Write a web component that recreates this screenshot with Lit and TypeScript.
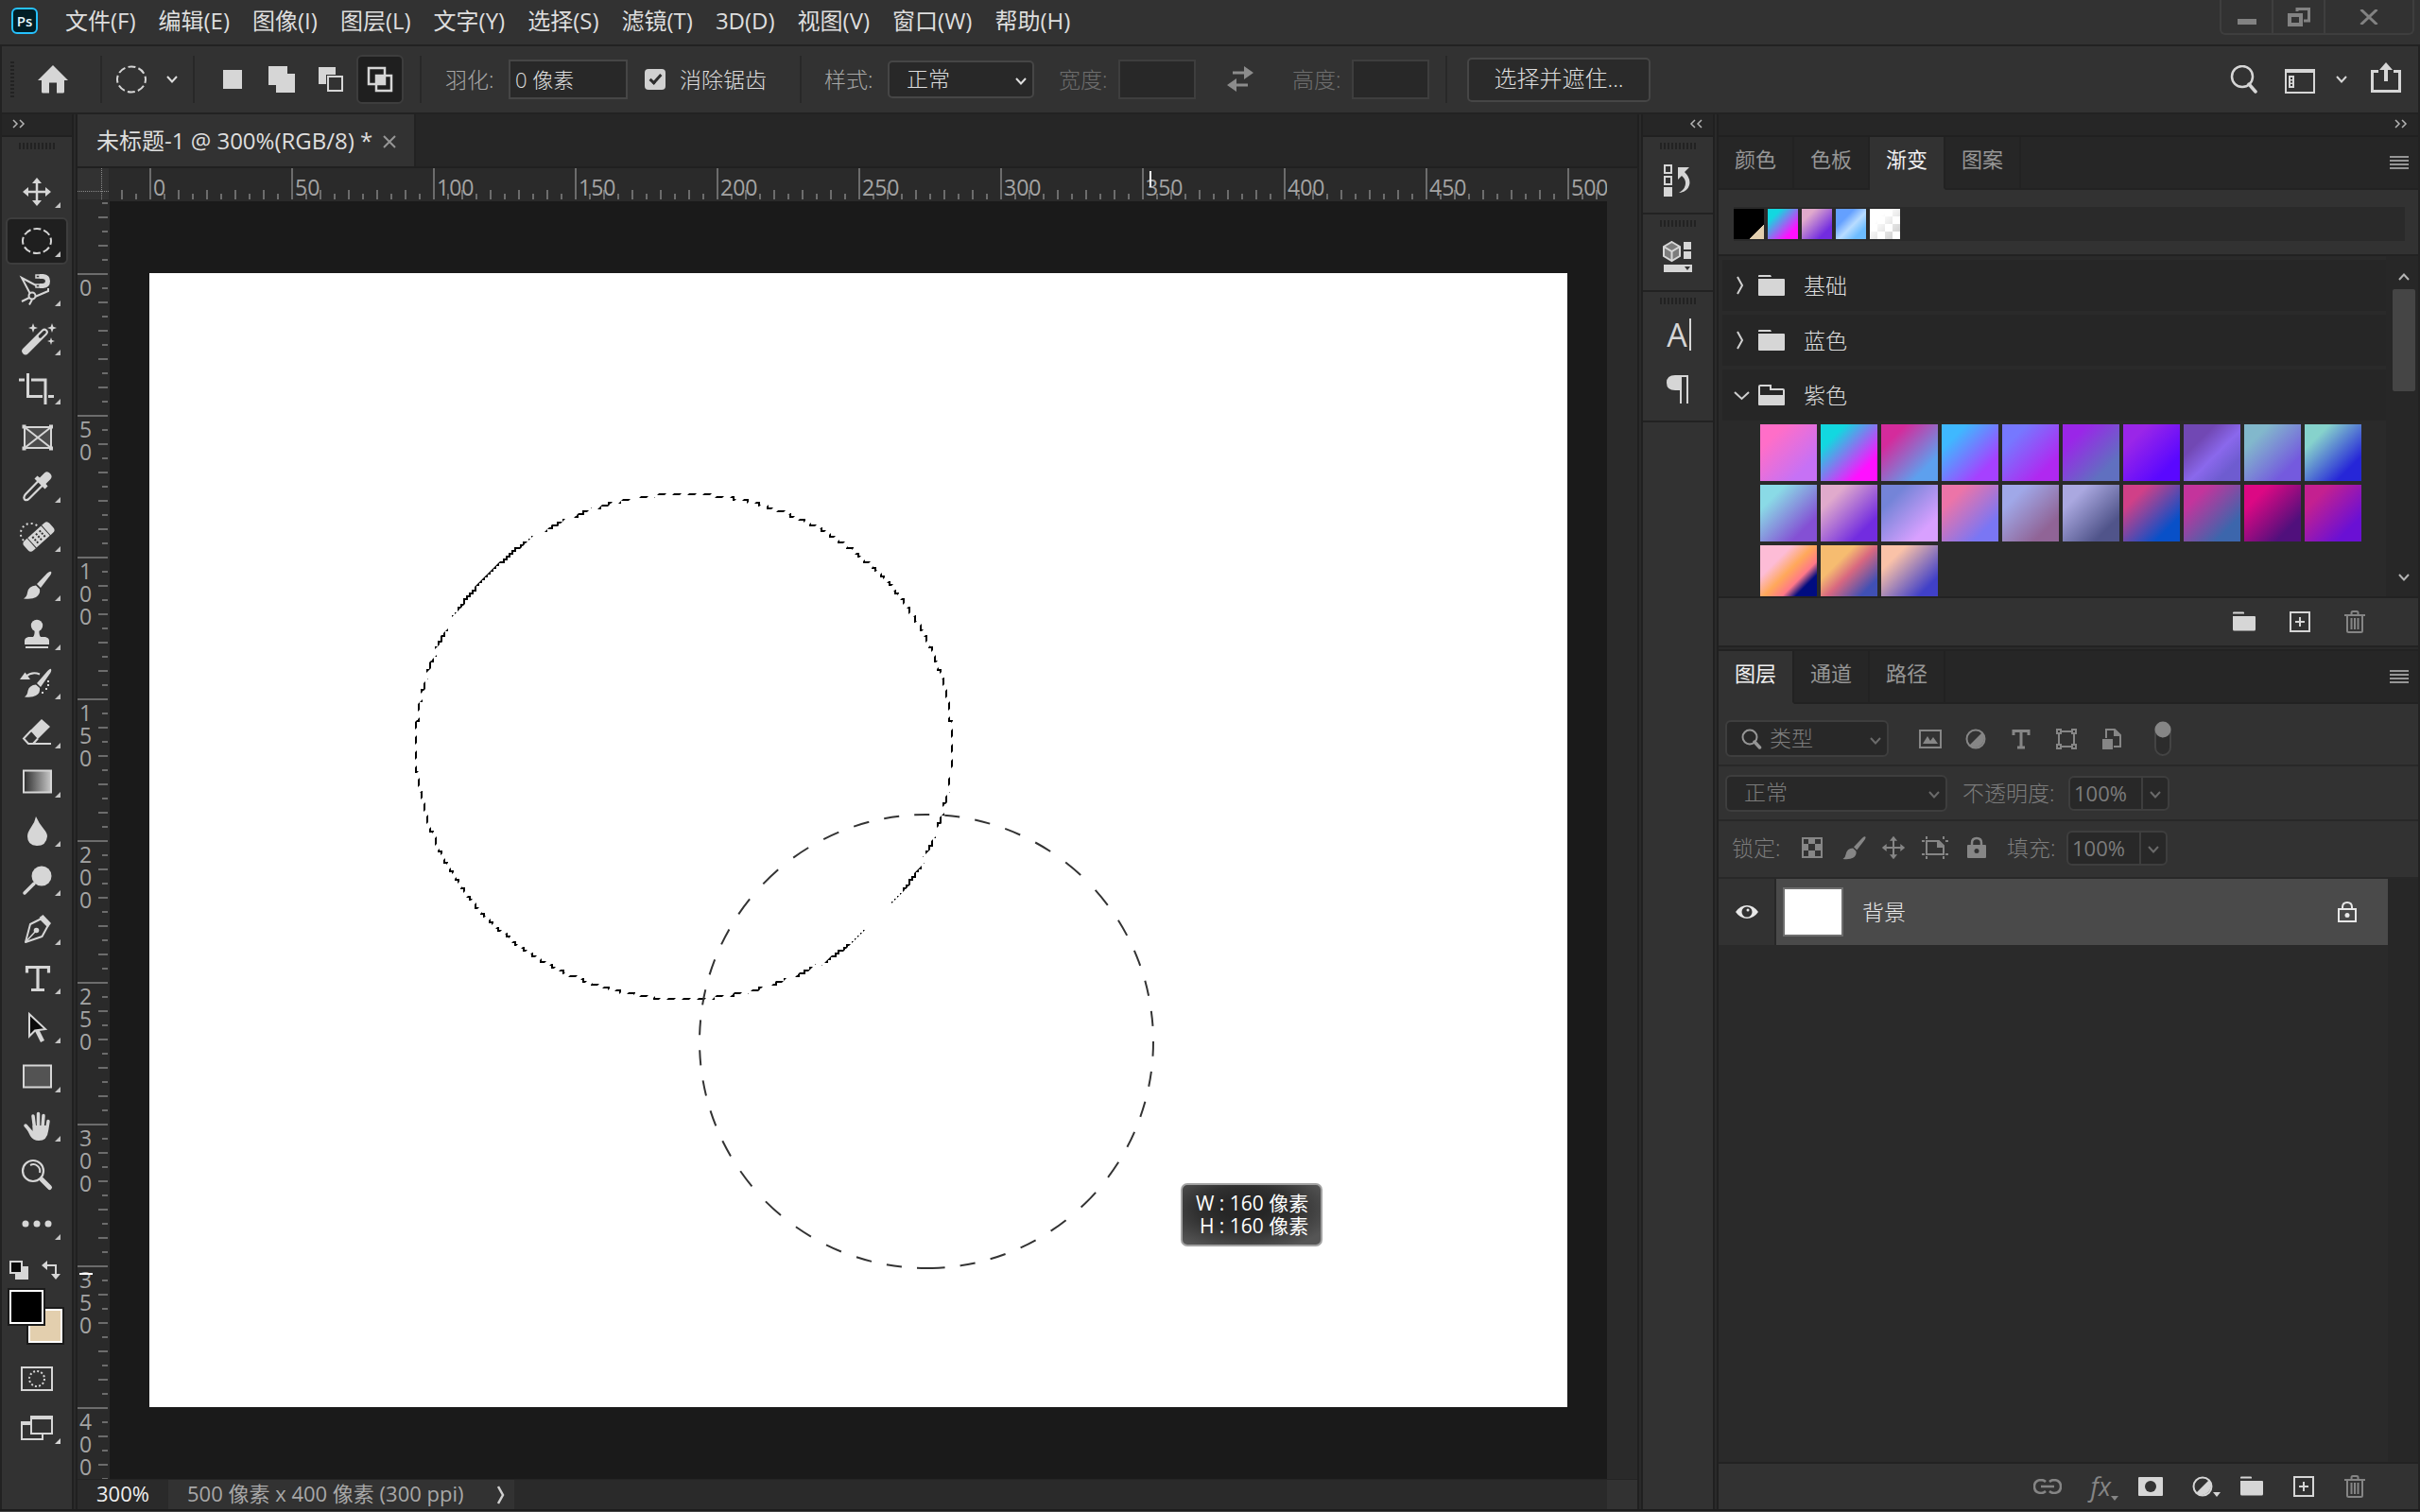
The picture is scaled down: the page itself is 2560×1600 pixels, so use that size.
import { LitElement, html, svg, css, TemplateResult } from "lit";
import { customElement, property } from "lit/decorators.js";
import { classMap } from "lit/directives/class-map.js";
import { styleMap } from "lit/directives/style-map.js";

const base = css`
  *,
  *::before,
  *::after {
    box-sizing: border-box;
  }
  button,
  input,
  select {
    margin: 0;
    padding: 0;
    border: 0;
    background: none;
    color: inherit;
    font: inherit;
    appearance: none;
    border-radius: 0;
    outline: none;
  }
  button {
    display: flex;
    align-items: center;
    justify-content: center;
    flex: none;
  }
  svg {
    display: block;
    flex: none;
  }
  .grip {
    width: 38px;
    height: 7px;
    background: repeating-linear-gradient(90deg, #222 0 2px, transparent 2px 4px);
  }
`;

/* ---------- small shared icons ---------- */

const chevron = (w = 12) => html`<svg class="chev" width=${w} height="8" viewBox="0 0 12 8" aria-hidden="true">
  <path d="M1 1L6 6.5L11 1" fill="none" stroke="currentColor" stroke-width="2" />
</svg>`;

const folder = html`<svg width="24" height="22" viewBox="0 0 24 22" aria-hidden="true">
  <path d="M0 1.5Q0 .5 1 .5H11Q12 .5 12 1.5V2.5H0ZM0 5H23Q24 5 24 6V19Q24 20.500 22.500 20.500H1.500Q0 20.500 0 19Z" fill="currentColor" />
</svg>`;

const plusBox = html`<svg width="24" height="24" viewBox="0 0 24 24" aria-hidden="true">
  <path d="M2 2H22V22H2ZM12 7V17M7 12H17" fill="none" stroke="currentColor" stroke-width="2" />
</svg>`;

const trash = html`<svg width="22" height="24" viewBox="0 0 22 24" aria-hidden="true">
  <path d="M0 5H22M7.500 4V2.500Q7.500 1 9 1H13Q14.500 1 14.500 2.500V4M3 5V21.500Q3 23 4.500 23H17.500Q19 23 19 21.500V5M7.500 8V20M11 8V20M14.500 8V20" fill="none" stroke="currentColor" stroke-width="2" />
</svg>`;

const halfDisc = html`<svg width="22" height="22" viewBox="0 0 22 22" aria-hidden="true">
  <circle cx="11" cy="11" r="9.500" fill="none" stroke="currentColor" stroke-width="2" />
  <path d="M18 4A10 10 0 0 1 4 18Z" fill="currentColor" />
</svg>`;

const doubleChevron = (left: boolean) => html`<svg width="14" height="10" viewBox="0 0 14 10" aria-hidden="true">
  <path
    d=${left ? "M6 1L2 5L6 9M13 1L9 5L13 9" : "M1 1L5 5L1 9M8 1L12 5L8 9"}
    fill="none" stroke="#b4b4b4" stroke-width="1.500" />
</svg>`;

const brushShape = svg`
  <path d="M15 -14Q16 -13 14 -10L4 3L0 -1L11 -12.500Q14 -15 15 -14Z" fill="currentColor"/>
  <path d="M-1 0.500L3 4.500Q4 10 -1 13Q-5 15.500 -14 14.500Q-10.500 12.500 -10 8Q-9 1 -1 .500Z" fill="currentColor"/>`;

const moveShape = svg`
  <path d="M-11 0H11M0 -11V11" stroke="currentColor" stroke-width="2.500"/>
  <path d="M-15 0L-9 -5V5ZM15 0L9 -5V5ZM0 -15L-5 -9H5ZM0 15L-5 9H5Z" fill="currentColor"/>`;

/* ---------- toolbar ---------- */

interface Tool {
  name: string;
  glyph: TemplateResult;
  more?: boolean;
}

const tools: Tool[] = [
  { name: "移动工具", glyph: moveShape },
  {
    name: "椭圆选框工具",
    glyph: svg`<ellipse rx="15" ry="13" fill="none" stroke="currentColor" stroke-width="2" stroke-dasharray="8 3" stroke-dashoffset="4"/>`,
  },
  {
    name: "磁性套索工具",
    glyph: svg`
      <path d="M-7 4L-16 -13L1 -4M-2 7L12 1V-2M-8 8L-16 12M-5 10L-8 15.500" fill="none" stroke="currentColor" stroke-width="2"/>
      <circle cx="-5" cy="6" r="3.500" fill="#323232" stroke="currentColor" stroke-width="2"/>
      <path d="M3 -14.500H6.500Q11.500 -14 11.500 -9.500Q11.500 -5 6.500 -4.500H3" fill="none" stroke="currentColor" stroke-width="5"/>
      <path d="M-1 -16H3V-13H-1ZM-1 -6H3V-3H-1Z" fill="#323232" stroke="currentColor" stroke-width="1.500"/>`,
  },
  {
    name: "魔棒工具",
    glyph: svg`
      <path d="M-12 12.500L8 -7.500" stroke="currentColor" stroke-width="7.500" stroke-linecap="round"/>
      <path d="M3.500 -3L8 -7.500" stroke="#323232" stroke-width="3.500" stroke-linecap="round"/>
      <path d="M-4 -17L-2.700 -13.300L1 -12L-2.700 -10.700L-4 -7L-5.300 -10.700L-9 -12L-5.300 -13.300ZM16 -17L17.300 -13.300L21 -12L17.300 -10.700L16 -7L14.700 -10.700L11 -12L14.700 -13.300ZM15 -2L16 1L19 2L16 3L15 6L14 3L11 2L14 1Z" fill="currentColor"/>`,
  },
  {
    name: "裁剪工具",
    glyph: svg`<path d="M-19 -9H-13M-9.500 -16V8.500H6M-6 -9H9V17M12 8.500H18" fill="none" stroke="currentColor" stroke-width="3"/>`,
  },
  {
    name: "图框工具",
    more: false,
    glyph: svg`
      <path d="M-13 -11H15V11H-13ZL15 11M15 -11L-13 11" fill="#4c4c4c" stroke="currentColor" stroke-width="2"/>
      <path d="M-15.500 -13.500H-11.500V-9.500H-15.500ZM13 -13.500H17V-9.500H13ZM-15.500 9.500H-11.500V13.500H-15.500ZM13 9.500H17V13.500H13Z" fill="currentColor"/>`,
  },
  {
    name: "吸管工具",
    glyph: svg`
      <path d="M2 -6.500L6.500 -2L-7 11.500Q-10 15 -12.500 14Q-15 11.500 -12 8Z" fill="none" stroke="currentColor" stroke-width="2.200"/>
      <path d="M-2.500 -8.500L.5 -11.500L3 -9.500L8 -14.500Q11 -17 14 -14Q17 -11 14.500 -8L9.500 -3L11.500 -.5L8.500 2.500Z" fill="currentColor"/>`,
  },
  {
    name: "污点修复画笔工具",
    glyph: svg`
      <g transform="translate(2 1) rotate(-42)">
        <path d="M-9.500 -7H9.500V7H-9.500Z" fill="currentColor"/>
        <path d="M-10.500 -7V7H-14Q-18 7 -18 3V-3Q-18 -7 -14 -7ZM10.500 -7V7H14Q18 7 18 3V-3Q18 -7 14 -7Z" fill="currentColor"/>
        <path d="M-6 -3.500H-4M-1 -3.500H1M4 -3.500H6M-6 0H-4M-1 0H1M4 0H6M-6 3.500H-4M-1 3.500H1M4 3.500H6" stroke="#323232" stroke-width="2"/>
      </g>
      <path d="M-14 5A10.500 10.500 0 0 1 1 -10" fill="none" stroke="currentColor" stroke-width="2" stroke-dasharray="2 3"/>`,
  },
  { name: "画笔工具", glyph: brushShape },
  {
    name: "仿制图章工具",
    glyph: svg`
      <circle cy="-9" r="6.200" fill="currentColor"/>
      <path d="M-2.500 -5H2.500Q2 1 4 3H9Q13 4 13 7V11H-13V7Q-13 4 -9 3H-4Q-2 1 -2.500 -5ZM-12 13H12V15H-12Z" fill="currentColor"/>`,
  },
  {
    name: "历史记录画笔工具",
    glyph: svg`
      <path d="M15 -15Q16 -13 13 -9L4 4L0 0L10 -11.500Q14 -16 15 -15Z" fill="currentColor"/>
      <path d="M-1 1.500L3 5Q4 10 -1 13Q-5 15.500 -13 14.500Q-10 12.500 -9.500 8Q-8 2 -1 1.500Z" fill="currentColor"/>
      <path d="M-18 -4H-7L-12.500 -11.500Z" fill="currentColor"/>
      <path d="M-12 -7Q-5 -13 3 -9.500" fill="none" stroke="currentColor" stroke-width="2"/>
      <path d="M11 -3H13V-1H11ZM11 1H13V3H11ZM9 5H11V7H9ZM5 9H7V11H5Z" fill="currentColor"/>`,
  },
  {
    name: "橡皮擦工具",
    glyph: svg`
      <path d="M5 -14L14 -6L1 7L-7 -2Z" fill="currentColor"/>
      <path d="M-6 -2L-14 6.500L-9 12H15M-4 12L1 6.500" fill="none" stroke="currentColor" stroke-width="2"/>`,
  },
  {
    name: "渐变工具",
    glyph: svg`
      <defs><linearGradient id="tone"><stop offset="0" stop-color="#2c2c2c"/><stop offset="1" stop-color="#c8c8c8"/></linearGradient></defs>
      <rect x="-14" y="-11.500" width="29" height="23" fill="url(#tone)" stroke="currentColor" stroke-width="2"/>`,
  },
  { name: "模糊工具", glyph: svg`<path d="M-1 -15Q2 -8 7.500 -1.500Q11 2.500 11 6Q10 16 0 16Q-10 15.500 -10 6Q-10 2 -6.500 -3Q-2 -9 -1 -15Z" fill="currentColor"/>` },
  {
    name: "减淡工具",
    glyph: svg`<circle cx="5" cy="-4" r="10.500" fill="currentColor"/><path d="M-3 4L-13 14" stroke="currentColor" stroke-width="3.500" stroke-linecap="round"/>`,
  },
  {
    name: "钢笔工具",
    glyph: svg`
      <path d="M-12 14L-7 -5L4 -10.500L11.500 -3L5.500 8Z" fill="none" stroke="currentColor" stroke-width="2" stroke-linejoin="round"/>
      <path d="M2.500 -12L6.500 -15L15 -6L12 -2Z" fill="currentColor"/>
      <path d="M-12 14L-1 2" stroke="currentColor" stroke-width="1.500"/><circle cx="-.5" cy="1.500" r="2.800" fill="currentColor"/>`,
  },
  {
    name: "横排文字工具",
    glyph: svg`<path d="M-10.500 -5.500V-11.500H12.500V-5.500M1 -12V13M-6 12.500H8" fill="none" stroke="currentColor" stroke-width="3.200"/>`,
  },
  {
    name: "路径选择工具",
    glyph: svg`
      <path d="M0 3L6 15" stroke="currentColor" stroke-width="4.500"/>
      <path d="M-8 -14V9.500L-2 3.500L9 2Z" fill="#0a0a0a" stroke="currentColor" stroke-width="2"/>`,
  },
  { name: "矩形工具", glyph: svg`<rect x="-14" y="-11.500" width="29" height="23" fill="#535353" stroke="currentColor" stroke-width="2"/>` },
  {
    name: "抓手工具",
    glyph: svg`
      <path d="M-4 -10L-2.500 2M1.500 -12.500V2M7 -10.500L6 2M12 -4.500L10.500 5M-12 0L-5 8" stroke="currentColor" stroke-width="3.500" stroke-linecap="round"/>
      <path d="M-4.500 0H12V6Q11 16 2 16Q-4 16 -7 11L-11 3L-4.500 6Z" fill="currentColor"/>`,
  },
  {
    name: "缩放工具",
    more: false,
    glyph: svg`
      <circle cx="-4" cy="-4" r="11" fill="none" stroke="currentColor" stroke-width="2.200"/>
      <path d="M-7 -10A7 7 0 0 1 3 -2" fill="none" stroke="currentColor" stroke-width="2"/>
      <path d="M5 5L13.500 13.500" stroke="currentColor" stroke-width="5" stroke-linecap="round"/>`,
  },
  { name: "编辑工具栏", glyph: svg`<circle cx="-12" r="3.500" fill="currentColor"/><circle r="3.500" fill="currentColor"/><circle cx="12" r="3.500" fill="currentColor"/>` },
];

const toolIcon = (t: Tool) => html`<svg width="64" height="50" viewBox="-32 -25 64 50" aria-hidden="true">
  ${t.glyph}${t.more === false ? null : svg`<path d="M25 11V17H19Z" fill="#c4c4c4"/>`}
</svg>`;

@customElement("ps-toolbar")
class PsToolbar extends LitElement {
  static styles = [
    base,
    css`
      :host {
        display: flex;
        flex-direction: column;
        width: 74px;
        flex: none;
        background: #323232;
        color: #d6d6d6;
      }
      .head {
        height: 24px;
        padding: 0 0 2px 11px;
        display: flex;
        align-items: center;
        background: #262626;
        border-bottom: 2px solid #202020;
        flex: none;
      }
      .grip {
        margin: 6px 0 20px 18px;
      }
      .tools {
        display: grid;
        grid-auto-rows: 50px;
        gap: 2px;
        justify-items: center;
      }
      .tool {
        width: 66px;
        height: 50px;
        border: 2px solid transparent;
        border-radius: 6px;
      }
      .tool.on {
        background: #1f1f1f;
        border-color: #3d3d3d;
      }
      .presets {
        display: flex;
        justify-content: space-between;
        padding: 14px 12px 9px 8px;
      }
      .colors {
        margin: 0 0 11px 6px;
        align-self: flex-start;
      }
    `,
  ];
  render() {
    return html`
      <div class="head">${doubleChevron(false)}</div>
      <div class="grip"></div>
      <div class="tools">
        ${tools.map(
          (t, i) => html`<button class=${classMap({ tool: true, on: i === 1 })} aria-label=${t.name}>${toolIcon(t)}</button>`,
        )}
      </div>
      <div class="presets">
        <button aria-label="默认前景色和背景色">
          <svg width="20" height="20" viewBox="0 0 20 20">
            <path d="M6 6H20V20H6Z" fill="currentColor" />
            <path d="M1 1H13V13H1Z" fill="#0a0a0a" stroke="currentColor" stroke-width="2" />
          </svg>
        </button>
        <button aria-label="切换前景色和背景色">
          <svg width="20" height="20" viewBox="0 0 20 20">
            <path d="M4 5H15V16" fill="none" stroke="currentColor" stroke-width="2" />
            <path d="M0 5L6 0V10ZM15 20L10 14H20Z" fill="currentColor" />
          </svg>
        </button>
      </div>
      <button class="colors" aria-label="前景色和背景色">
        <svg width="60" height="60" viewBox="0 0 60 60">
          <path d="M20 20H60V60H20Z" fill="#1a1a1a" />
          <path d="M22 22H58V58H22Z" fill="#fff" />
          <path d="M24 24H56V56H24Z" fill="#e3cfae" />
          <path d="M0 0H40V40H0Z" fill="#1a1a1a" />
          <path d="M2 2H38V38H2Z" fill="#fff" />
          <path d="M4 4H36V36H4Z" fill="#000" />
        </svg>
      </button>
      <div class="tools">
        <button class="tool" aria-label="以快速蒙版模式编辑">
          <svg width="64" height="50" viewBox="-32 -25 64 50">
            <path d="M-16 -12H16V12H-16Z" fill="none" stroke="currentColor" stroke-width="2" />
            <circle r="8" fill="none" stroke="currentColor" stroke-width="2" stroke-dasharray="2 2.188" />
          </svg>
        </button>
        <button class="tool" aria-label="更改屏幕模式">
          <svg width="64" height="50" viewBox="-32 -25 64 50">
            <path d="M-6 -6H-16V12H6V7" fill="none" stroke="currentColor" stroke-width="2" />
            <path d="M-17 -7H-6V-3H-17Z" fill="currentColor" />
            <path d="M-6 -12H16V6H-6Z" fill="#323232" stroke="currentColor" stroke-width="2" />
            <path d="M-7 -13H17V-9H-7ZM25 11V17H19Z" fill="currentColor" />
          </svg>
        </button>
      </div>
    `;
  }
}

/* ---------- menu and options bars ---------- */

@customElement("ps-menubar")
class PsMenubar extends LitElement {
  static styles = [
    base,
    css`
      :host {
        display: flex;
        align-items: center;
        height: 49px;
        flex: none;
        background: #323232;
        border-bottom: 2px solid #222;
        padding-left: 12px;
        color: #dedede;
        font-size: 24px;
        line-height: 32px;
      }
      nav {
        display: flex;
        gap: 24px;
        margin: 0 0 4px 29px;
      }
      .logo {
        width: 28px;
        height: 28px;
        display: grid;
        place-items: center;
        border: 2px solid #26c2ff;
        border-radius: 6px;
        background: #001e26;
        color: #e6f8ff;
        font-size: 15px;
        line-height: 20px;
        font-weight: 600;
        margin-bottom: 4px;
      }
      .window {
        display: flex;
        align-self: flex-start;
        margin: 0 6px 0 auto;
        height: 37px;
        border: 2px solid #3e3e3e;
        border-top: 0;
        border-radius: 0 0 6px 6px;
        color: #828282;
      }
      .window button {
        width: 55px;
        border-right: 2px solid #3e3e3e;
      }
      .window button:last-child {
        width: 92px;
        border-right: 0;
      }
    `,
  ];
  render() {
    const items = ["文件(F)", "编辑(E)", "图像(I)", "图层(L)", "文字(Y)", "选择(S)", "滤镜(T)", "3D(D)", "视图(V)", "窗口(W)", "帮助(H)"];
    return html`
      <span class="logo">Ps</span>
      <nav>${items.map((t) => html`<button>${t}</button>`)}</nav>
      <div class="window">
        <button aria-label="最小化">
          <svg width="20" height="20" viewBox="0 0 20 20"><path d="M0 12H20V18H0Z" fill="currentColor" /></svg>
        </button>
        <button aria-label="还原">
          <svg width="24" height="20" viewBox="0 0 24 20">
            <path d="M10 4V1.500H22.500V14H17" fill="none" stroke="currentColor" stroke-width="3" />
            <path d="M2 8H14V18H2Z" fill="none" stroke="currentColor" stroke-width="4" />
          </svg>
        </button>
        <button aria-label="关闭">
          <svg width="20" height="16" viewBox="0 0 20 16"><path d="M1.500 0L18.500 16M18.500 0L1.500 16" stroke="currentColor" stroke-width="3" /></svg>
        </button>
      </div>
    `;
  }
}

@customElement("ps-options")
class PsOptions extends LitElement {
  static styles = [
    base,
    css`
      :host {
        display: flex;
        align-items: center;
        height: 72px;
        flex: none;
        background: #323232;
        border: solid #222;
        border-width: 0 2px 2px;
        padding: 0 18px 0 9px;
        color: #dedede;
        font-size: 23px;
        line-height: 30px;
        font-weight: 300;
        white-space: nowrap;
      }
      .handle {
        width: 4px;
        height: 38px;
        background: repeating-linear-gradient(#222 0 2px, transparent 2px 4px);
        margin-right: 24px;
      }
      .sep {
        width: 2px;
        height: 50px;
        background: #282828;
        flex: none;
      }
      .s1 {
        margin-left: 33px;
      }
      .s2 {
        margin-left: 16px;
      }
      .s3 {
        margin-right: 25px;
      }
      .s4 {
        margin: 0 24px 0 35px;
      }
      .s5 {
        margin: 0 21px 0 17px;
      }
      .shape {
        margin: 0 20px 0 14px;
      }
      .modes {
        display: flex;
        gap: 2px;
        margin: 0 17px 0 15px;
      }
      .mode {
        width: 50px;
        height: 52px;
        border: 2px solid transparent;
        border-radius: 6px;
      }
      .mode.on {
        background: #1f1f1f;
        border-color: #3d3d3d;
      }
      .lab {
        width: 67px;
        color: #a8a8a8;
      }
      .lab.off {
        width: 63px;
        color: #6e6e6e;
      }
      .field {
        width: 82px;
        height: 42px;
        background: #282828;
        border: 2px solid #3e3e3e;
        padding: 0 5px 2px;
        font-size: 22px;
      }
      .field.wide {
        width: 126px;
        border-color: #464646;
      }
      .check {
        width: 22px;
        height: 22px;
        margin: 0 15px 0 18px;
        border-radius: 4px;
        background: #d0d0d0;
        position: relative;
      }
      .check::after {
        content: "";
        position: absolute;
        left: 8px;
        top: 3px;
        width: 7px;
        height: 13px;
        border: solid #2c2c2c;
        border-width: 0 3px 3px 0;
        transform: rotate(42deg);
      }
      .pick {
        display: grid;
        width: 155px;
        align-items: center;
        margin-right: 26px;
      }
      .pick > * {
        grid-area: 1 / 1;
      }
      .pick select {
        height: 40px;
        padding: 0 18px 2px;
        border: 2px solid #464646;
        border-radius: 5px;
        background: #282828;
        font-size: 23px;
      }
      .chev {
        pointer-events: none;
      }
      .pick .chev {
        justify-self: end;
        margin: 3px 8px 0 0;
      }
      .swap {
        margin: 0 41px 0 33px;
      }
      .mask {
        width: 194px;
        height: 47px;
        padding-bottom: 3px;
        border: 2px solid #464646;
        border-radius: 5px;
        background: #2a2a2a;
        font-size: 24px;
      }
      .right {
        display: flex;
        align-items: center;
        margin-left: auto;
        color: #d6d6d6;
      }
      .space {
        margin: 0 22px 0 28px;
        padding-top: 3px;
      }
      .share {
        margin-left: 25px;
        padding-bottom: 4px;
      }
    `,
  ];
  render() {
    return html`
      <div class="handle"></div>
      <button aria-label="主页">
        <svg width="34" height="30" viewBox="0 0 34 30">
          <path d="M17 0L33 16H29V28Q29 29.500 27.500 29.500H21V18.500H13V29.500H6.500Q5 29.500 5 28V16H1Z" fill="#d6d6d6" />
        </svg>
      </button>
      <div class="sep s1"></div>
      <button class="shape" aria-label="工具预设">
        <svg width="34" height="30" viewBox="-17 -15 34 30">
          <ellipse rx="15" ry="13.500" fill="none" stroke="#d6d6d6" stroke-width="2" stroke-dasharray="8 3.200" stroke-dashoffset="4" />
        </svg>
      </button>
      <button aria-label="打开预设">${chevron()}</button>
      <div class="sep s2"></div>
      <div class="modes">
        <button class="mode" aria-label="新选区"><svg width="30" height="30"><path d="M5 5H25V25H5Z" fill="#d6d6d6" /></svg></button>
        <button class="mode" aria-label="添加到选区">
          <svg width="30" height="30"><path d="M1 1H21V9H29V29H9V21H1Z" fill="#d6d6d6" /></svg>
        </button>
        <button class="mode" aria-label="从选区减去">
          <svg width="30" height="30">
            <path d="M2 2H20V10H10V20H2Z" fill="#d6d6d6" />
            <path d="M12 12H27V27H12Z" fill="none" stroke="#d6d6d6" stroke-width="2" />
          </svg>
        </button>
        <button class="mode on" aria-label="与选区交叉">
          <svg width="30" height="30">
            <path d="M3 3H20V20H3ZM11 11H27V27H11Z" fill="none" stroke="#d6d6d6" stroke-width="2.500" />
            <path d="M10 10H21V21H10Z" fill="#d6d6d6" />
          </svg>
        </button>
      </div>
      <div class="sep s3"></div>
      <label class="lab" for="feather">羽化:</label>
      <input class="field wide" id="feather" value="0 像素" />
      <input class="check" id="aa" type="checkbox" checked />
      <label for="aa">消除锯齿</label>
      <div class="sep s4"></div>
      <label class="lab" for="mode">样式:</label>
      <div class="pick">
        <select id="mode"><option>正常</option></select>
        ${chevron()}
      </div>
      <label class="lab off" for="w">宽度:</label>
      <input class="field" id="w" disabled />
      <button class="swap" aria-label="高度和宽度互换">
        <svg width="28" height="28" viewBox="0 0 28 28">
          <path d="M6 7H20M8 20H22" stroke="#8c8c8c" stroke-width="3" />
          <path d="M28 7L18 0V14ZM0 20L10 13V27Z" fill="#8c8c8c" />
        </svg>
      </button>
      <label class="lab off" for="h">高度:</label>
      <input class="field" id="h" disabled />
      <div class="sep s5"></div>
      <button class="mask">选择并遮住...</button>
      <div class="right">
        <button aria-label="搜索">
          <svg width="30" height="30" viewBox="0 0 30 30">
            <circle cx="13" cy="12" r="11" fill="none" stroke="currentColor" stroke-width="2.500" />
            <path d="M20 20L27 28" stroke="currentColor" stroke-width="3.500" stroke-linecap="round" />
          </svg>
        </button>
        <button class="space" aria-label="选择工作区">
          <svg width="32" height="26" viewBox="0 0 32 26">
            <path d="M1 1H31V25H1Z" fill="none" stroke="currentColor" stroke-width="2" />
            <path d="M1 1H31V4H1ZM4 7H10V20H4Z" fill="currentColor" />
            <path d="M6 9H8V11H6ZM6 12.500H8V14.500H6ZM6 16H8V18H6Z" fill="#323232" />
          </svg>
        </button>
        <button aria-label="工作区菜单">${chevron()}</button>
        <button class="share" aria-label="共享">
          <svg width="32" height="32" viewBox="0 0 32 32">
            <path d="M8 9.500H1.500V30.500H30.500V9.500H24" fill="none" stroke="currentColor" stroke-width="3" />
            <path d="M16 3V20" stroke="currentColor" stroke-width="4" />
            <path d="M16 0L23 8H9Z" fill="currentColor" />
          </svg>
        </button>
      </div>
    `;
  }
}

/* ---------- document window ---------- */

const SCALE = 3;
const STEP = 5 * SCALE;
const MARGIN_X = 42;
const MARGIN_Y = 76;

const range = (a: number, b: number) => Array.from({ length: b - a + 1 }, (_, i) => a + i);

function ticks(origin: number, from: number, to: number, horizontal: boolean, edge: number): string {
  return range(from, to)
    .map((n) => {
      const p = origin + n * STEP + 1;
      const len = n % 10 === 0 ? edge : n % 2 === 0 ? 10 : 6;
      return horizontal ? `M${p} ${edge - len}V${edge}` : `M${edge - len} ${p}H${edge}`;
    })
    .join("");
}

/* Outline of an elliptical selection, following document pixel edges. */
function selectionPath(x0: number, y0: number, w: number, h: number): string {
  const cx = x0 + w / 2;
  const half = (row: number) => {
    const t = (row + 0.5 - h / 2) / (h / 2);
    return (w / 2) * Math.sqrt(Math.max(0, 1 - t * t));
  };
  let d = "";
  for (let r = 0; r < h; r++) {
    const x = Math.round(cx + half(r)) * SCALE;
    d += `${r ? "L" : "M"}${x} ${(y0 + r) * SCALE}V${(y0 + r + 1) * SCALE}`;
  }
  for (let r = h - 1; r >= 0; r--) {
    const x = Math.round(cx - half(r)) * SCALE;
    d += `L${x} ${(y0 + r + 1) * SCALE}V${(y0 + r) * SCALE}`;
  }
  return d + "Z";
}

/* Dashes are measured along the dominant axis of travel, clockwise from the bottom. */
function dragPath(cx: number, cy: number, r: number, dash: number): string {
  const start = Math.PI / 2 - 6 / r;
  const n = 14400;
  let d = "";
  let s = 0;
  let on = false;
  let px = cx + r * Math.cos(start);
  let py = cy + r * Math.sin(start);
  for (let i = 0; i <= n; i++) {
    const a = start + (i / n) * Math.PI * 2;
    const x = cx + r * Math.cos(a);
    const y = cy + r * Math.sin(a);
    s += Math.max(Math.abs(x - px), Math.abs(y - py));
    px = x;
    py = y;
    const want = s % (dash * 2) < dash && i < n;
    if (want !== on) {
      d += want ? `M${x.toFixed(1)} ${y.toFixed(1)}` : `A${r} ${r} 0 0 1 ${x.toFixed(1)} ${y.toFixed(1)}`;
      on = want;
    }
  }
  return d;
}

@customElement("ps-document")
class PsDocument extends LitElement {
  static styles = [
    base,
    css`
      :host {
        display: flex;
        flex-direction: column;
        flex: 1;
        min-width: 0;
        background: #262626;
      }
      .tabs {
        height: 57px;
        flex: none;
        border-bottom: 2px solid #202020;
        display: flex;
      }
      .tab {
        display: flex;
        align-items: center;
        background: #323232;
        border-right: 2px solid #222;
        padding: 0 19px 0 20px;
        gap: 11px;
        color: #dedede;
        font-size: 24px;
        line-height: 32px;
        white-space: nowrap;
      }
      .close {
        color: #969696;
        padding-top: 2px;
      }
      .stage {
        flex: 1;
        min-height: 0;
        display: grid;
        grid-template: 35px minmax(0, 1fr) / 34px minmax(0, 1fr) 32px;
        background: #2a2a2a;
      }
      .corner {
        background: #323232;
        width: 33px;
        height: 33px;
      }
      .ruler {
        overflow: hidden;
        display: flex;
        justify-content: center;
        align-items: center;
        position: relative;
      }
      .ruler.top {
        grid-column: 2 / 4;
        justify-content: flex-start;
      }
      .ruler text {
        fill: #a4a4a4;
        font-size: 23px;
      }
      .ruler path {
        stroke: #6c6c6c;
        stroke-width: 2px;
        shape-rendering: crispEdges;
      }
      .ruler .cursor {
        stroke: #fff;
      }
      .num {
        position: absolute;
        left: 2px;
        width: 14px;
        color: #a4a4a4;
        font-size: 23px;
        line-height: 24px;
        word-break: break-all;
        pointer-events: none;
      }
      .viewport {
        background: #1a1a1a;
        overflow: hidden;
        display: flex;
        align-items: center;
        justify-content: center;
      }
      .page {
        position: relative;
        flex: none;
        background: #fff;
      }
      .tip {
        position: absolute;
        left: 1091px;
        top: 963px;
        padding: 7px 13px 8px 14px;
        border: 2px solid #a2a2a2;
        border-radius: 7px;
        background: radial-gradient(ellipse at 45% 40%, #262626 20%, #303030 45%, #555 85%);
        color: #fff;
        font-size: 21px;
        line-height: 24px;
        text-align: right;
        white-space: nowrap;
      }
      .status {
        flex: none;
        height: 32px;
        display: flex;
        background: #2a2a2a;
        font-size: 22px;
        line-height: 28px;
        border-top: 1px solid #242424;
        white-space: nowrap;
      }
      .zoom {
        width: 96px;
        padding-left: 20px;
        color: #f0f0f0;
      }
      .info {
        display: flex;
        align-items: center;
        gap: 36px;
        padding: 0 10px 0 20px;
        background: #323232;
        color: #a8a8a8;
      }
      .info span {
        align-self: flex-start;
      }
      .grow {
        width: 32px;
        margin-left: auto;
        background: #323232;
      }
    `,
  ];
  render() {
    const labels = range(0, 10).map((n) => n * 50);
    return html`
      <div class="tabs">
        <div class="tab">
          <span>未标题-1 @ 300%(RGB/8) *</span>
          <button class="close" aria-label="关闭文档">
            <svg width="14" height="14" viewBox="0 0 14 14"><path d="M1 1L13 13M13 1L1 13" stroke="currentColor" stroke-width="2" /></svg>
          </button>
        </div>
      </div>
      <div class="stage">
        <div class="corner">
          <svg width="33" height="33"><path d="M25.500 0V33M0 24.500H33" stroke="#8a8a8a" stroke-dasharray="1 1" /></svg>
        </div>
        <div class="ruler top">
          <svg width="1584" height="35" role="img" aria-label="水平标尺">
            <path d=${ticks(MARGIN_X, -2, 102, true, 33)} />
            ${labels.map((n) => svg`<text x=${MARGIN_X + n * SCALE + 4} y="29">${n}</text>`)}
            <path class="cursor" d="M1101 3V20" />
          </svg>
        </div>
        <div class="ruler">
          <svg width="34" height="1352" role="img" aria-label="垂直标尺">
            <path d=${ticks(MARGIN_Y, -5, 85, false, 32)} />
          </svg>
          ${labels
            .filter((n) => n <= 400)
            .map((n) => html`<div class="num" style=${styleMap({ top: `${MARGIN_Y + n * SCALE + 3}px` })}>${n}</div>`)}
          <svg class="num" width="20" height="3" style=${styleMap({ top: "1134px" })} aria-hidden="true">
            <path class="cursor" d="M0 1H17" />
          </svg>
        </div>
        <div class="viewport">
          <div class="page">
            <svg width=${500 * SCALE} height=${400 * SCALE}>
              <defs>
                <pattern id="ants" width="16" height="16" patternUnits="userSpaceOnUse">
                  <path d="M4 0H12L0 12V4ZM16 4V12L12 16H4Z" fill="#000" />
                </pattern>
              </defs>
              <path d=${selectionPath(94, 78, 189, 178)} fill="none" stroke="url(#ants)" stroke-width="2" shape-rendering="crispEdges" />
              <path d=${dragPath(822, 813, 240, 16)} fill="none" stroke="#333" stroke-width="2" />
            </svg>
            <div class="tip">W : 160 像素<br />H : 160 像素</div>
          </div>
        </div>
      </div>
      <div class="status">
        <span class="zoom">300%</span>
        <div class="info">
          <span>500 像素 x 400 像素 (300 ppi)</span>
          <svg width="8" height="20" viewBox="0 0 8 20"><path d="M1 1L6 10L1 19" fill="none" stroke="#d0d0d0" stroke-width="2.500" /></svg>
        </div>
        <div class="grow"></div>
      </div>
    `;
  }
}

/* ---------- collapsed dock ---------- */

@customElement("ps-dock")
class PsDock extends LitElement {
  static styles = [
    base,
    css`
      :host {
        display: flex;
        flex-direction: column;
        width: 74px;
        flex: none;
        background: #323232;
        color: #d6d6d6;
      }
      .head {
        height: 24px;
        padding: 0 11px 2px 0;
        display: flex;
        justify-content: flex-end;
        align-items: center;
        background: #262626;
        border-bottom: 2px solid #202020;
      }
      .group {
        display: flex;
        flex-direction: column;
        align-items: center;
        gap: 15px;
        height: 82px;
        padding-top: 6px;
        border-bottom: 2px solid #222;
      }
      .group.tall {
        height: 138px;
      }
      .char {
        font-size: 34px;
        line-height: 34px;
        border-right: 2px solid currentColor;
        width: 28px;
        margin-bottom: 10px;
      }
    `,
  ];
  render() {
    return html`
      <div class="head">${doubleChevron(true)}</div>
      <div class="group">
        <div class="grip"></div>
        <button aria-label="历史记录">
          <svg width="32" height="36" viewBox="0 0 32 36">
            <path d="M2 2H9V10H2ZM2 14H9V22H2Z" fill="none" stroke="currentColor" stroke-width="2" />
            <path d="M1 25H10V35H1ZM16 4H28L23 9Q30 16 28 23Q26 30 17 31Q24 27 24 21Q24 16 20 13L16 17Z" fill="currentColor" />
          </svg>
        </button>
      </div>
      <div class="group">
        <div class="grip"></div>
        <button aria-label="库">
          <svg width="32" height="34" viewBox="0 0 32 34">
            <path d="M9.500 1L18 6V16L9.500 21L1 16V6Z" fill="#7c7c7c" stroke="currentColor" stroke-width="2" />
            <path d="M1 6L9.500 11L18 6M9.500 11V21" fill="none" stroke="currentColor" stroke-width="2" />
            <path d="M22 1H30V9H22ZM22 11H30V19H22ZM1 25H31V33H1Z" fill="currentColor" />
            <path d="M23 27H29L26 31Z" fill="#323232" />
          </svg>
        </button>
      </div>
      <div class="group tall">
        <div class="grip"></div>
        <button class="char" aria-label="字符">A</button>
        <button aria-label="段落">
          <svg width="24" height="32" viewBox="0 0 24 32">
            <path d="M9 17Q0 17 0 9Q0 1 9 1H23V3H15V17Z" fill="currentColor" />
            <path d="M15 2V31M22 2V31" stroke="currentColor" stroke-width="2" />
          </svg>
        </button>
      </div>
    `;
  }
}

/* ---------- right panels ---------- */

@customElement("ps-tabstrip")
class PsTabstrip extends LitElement {
  @property({ attribute: false }) tabs: string[] = [];
  @property({ type: Number }) active = 0;
  static styles = [
    base,
    css`
      :host {
        display: flex;
        height: 56px;
        flex: none;
        background: #262626;
        color: #969696;
        font-size: 22px;
        line-height: 30px;
        font-weight: 400;
      }
      .tab {
        width: 80px;
        padding-bottom: 8px;
        border: solid #222;
        border-width: 0 2px 2px 0;
      }
      .tab.on {
        background: #323232;
        color: #f0f0f0;
        border-bottom-color: #323232;
      }
      .rest {
        flex: 1;
        display: flex;
        justify-content: flex-end;
        align-items: center;
        padding-right: 10px;
        border-bottom: 2px solid #222;
      }
    `,
  ];
  render() {
    return html`
      ${this.tabs.map((t, i) => html`<button class=${classMap({ tab: true, on: i === this.active })}>${t}</button>`)}
      <div class="rest">
        <button aria-label="面板菜单">
          <svg width="20" height="14"><path d="M0 1H20M0 5H20M0 9H20M0 13H20" stroke="#969696" stroke-width="2" /></svg>
        </button>
      </div>
    `;
  }
}

const grad = (...stops: string[]) => `linear-gradient(135deg, ${stops.join(", ")})`;
const two = (a: string, b: string) => grad(`${a} 22%`, `${b} 78%`);

const recent = [
  grad("#000 76%", "#e3cfae 76%"),
  two("#12d8e0", "#ff10ff"),
  two("#e0aacc", "#722ce0"),
  grad("#64a0ff 30%", "#b8dcff 55%", "#6cbcff 80%"),
  "linear-gradient(135deg, #fff 30%, transparent), repeating-conic-gradient(#c8c8c8 0 25%, #fff 0 50%) 0 0 / 16px 16px",
];

const purples = [
  two("#ff6ec8", "#c671f5"),
  two("#12d8e0", "#ff10ff"),
  two("#d42b9c", "#5da0ee"),
  two("#3fb8ff", "#a640ff"),
  two("#7678ff", "#b028f0"),
  two("#9a26e8", "#6070c0"),
  two("#9a26e8", "#5a08ff"),
  grad("#7148b4 28%", "#8a68ec 55%", "#6e5cd0 80%"),
  two("#82b8cc", "#745ade"),
  two("#86d2cc", "#2626d8"),
  two("#8adae6", "#8450d4"),
  two("#e0aacc", "#722ce0"),
  two("#7484d8", "#d8a0ff"),
  two("#ec74a8", "#7a76f4"),
  two("#a0a8e8", "#906496"),
  two("#aaa8e0", "#50548a"),
  two("#d04088", "#0850c8"),
  two("#c4349c", "#3c66ac"),
  two("#dc0884", "#50107c"),
  two("#c42090", "#6a10d4"),
  grad("#fdbcd6 28%", "#ffa85a 48%", "#ff7888 64%", "#000c80 76%"),
  grad("#f6bc70 30%", "#d86880 50%", "#4050b4 80%"),
  two("#fac2a8", "#4040c8"),
];

@customElement("ps-gradients")
class PsGradients extends LitElement {
  static styles = [
    base,
    css`
      :host {
        display: flex;
        flex-direction: column;
        flex: none;
        background: #323232;
        border-bottom: 2px solid #222;
        color: #dedede;
        font-size: 23px;
        line-height: 30px;
        font-weight: 300;
      }
      .recent {
        display: flex;
        gap: 4px;
        margin: 18px 14px 14px 16px;
        height: 36px;
        padding: 2px 0;
        background: #2a2a2a;
      }
      .mini {
        width: 32px;
        height: 32px;
      }
      .list {
        display: grid;
        grid-template-columns: minmax(0, 1fr) 34px;
        height: 364px;
        background: #2a2a2a;
        border-top: 2px solid #222;
        border-bottom: 2px solid #222;
        overflow: hidden;
      }
      .groups {
        padding: 4px 0 0 4px;
        overflow: hidden;
      }
      .group {
        width: 100%;
        height: 54px;
        margin-bottom: 4px;
        background: #262626;
        justify-content: flex-start;
        padding: 0 0 1px 12px;
      }
      .arrow {
        margin-right: 8px;
      }
      .dir {
        margin-right: 20px;
      }
      .swatches {
        display: flex;
        flex-wrap: wrap;
        gap: 4px;
        padding-left: 40px;
      }
      .swatch {
        width: 60px;
        height: 60px;
      }
      .scroll {
        background: #272727;
        display: flex;
        flex-direction: column;
        align-items: center;
        padding: 18px 0 16px 3px;
        color: #b4b4b4;
      }
      .thumb {
        width: 24px;
        height: 108px;
        margin: 9px 0 auto;
        background: #454545;
        border-radius: 2px;
      }
      .foot {
        display: flex;
        justify-content: flex-end;
        align-items: center;
        gap: 35px;
        height: 50px;
        padding: 0 56px 0 0;
        color: #d6d6d6;
      }
      .dim {
        color: #858585;
      }
    `,
  ];
  private group(name: string, open: boolean) {
    return html`<button class="group" aria-expanded=${open ? "true" : "false"}>
      <svg class="arrow" width="18" height="20" viewBox="0 0 18 20">
        <path d=${open ? "M1 7L8.500 14L16 7" : "M4 1L9 10L4 19"} fill="none" stroke="#d0d0d0" stroke-width="2" />
      </svg>
      <svg class="dir" width="28" height="24" viewBox="0 0 28 24">
        ${open
          ? svg`<path d="M1 12V3Q1 2 2 2H13V6H26Q27 6 27 7V12" fill="none" stroke="#d6d6d6" stroke-width="2"/><path d="M0 12H28V22Q28 23 27 23H1Q0 23 0 22Z" fill="#d6d6d6"/>`
          : svg`<path d="M0 2Q0 1 1 1H13L14 3H0ZM0 5H27Q28 5 28 6V22Q28 23 27 23H1Q0 23 0 22Z" fill="#d6d6d6"/>`}
      </svg>
      ${name}
    </button>`;
  }
  render() {
    return html`
      <ps-tabstrip .tabs=${["颜色", "色板", "渐变", "图案"]} .active=${2}></ps-tabstrip>
      <div class="recent">
        ${recent.map((g, i) => html`<button class="mini" aria-label=${`最近使用的渐变 ${i + 1}`} style=${styleMap({ background: g })}></button>`)}
      </div>
      <div class="list">
        <div class="groups">
          ${this.group("基础", false)} ${this.group("蓝色", false)} ${this.group("紫色", true)}
          <div class="swatches">
            ${purples.map((g, i) => html`<button class="swatch" aria-label=${`紫色 ${i + 1}`} style=${styleMap({ background: g })}></button>`)}
          </div>
        </div>
        <div class="scroll">
          <svg width="12" height="8" viewBox="0 0 12 8"><path d="M1 7L6 1.500L11 7" fill="none" stroke="currentColor" stroke-width="2" /></svg>
          <div class="thumb"></div>
          ${chevron()}
        </div>
      </div>
      <div class="foot">
        <button aria-label="创建新组">${folder}</button>
        <button aria-label="创建新渐变">${plusBox}</button>
        <button class="dim" aria-label="删除渐变">${trash}</button>
      </div>
    `;
  }
}

@customElement("ps-layers")
class PsLayers extends LitElement {
  static styles = [
    base,
    css`
      :host {
        display: flex;
        flex-direction: column;
        flex: 1;
        min-height: 0;
        background: #323232;
        border-top: 2px solid #222;
        color: #7c7c7c;
        font-size: 23px;
        line-height: 30px;
        font-weight: 300;
        white-space: nowrap;
      }
      .row {
        display: flex;
        align-items: center;
        padding: 0 7px;
        border-bottom: 2px solid #282828;
        height: 58px;
        flex: none;
      }
      .filter {
        height: 66px;
        padding-top: 9px;
      }
      .lock {
        height: 61px;
        padding: 0 7px 3px;
      }
      .pick {
        display: grid;
        align-items: center;
        color: #7c7c7c;
      }
      .pick > * {
        grid-area: 1 / 1;
      }
      .pick select {
        width: 235px;
        height: 39px;
        padding: 0 18px 2px;
        border: 2px solid #3e3e3e;
        border-radius: 6px;
        background: #282828;
      }
      .pick.kind select {
        width: 173px;
        padding-left: 45px;
      }
      .chev {
        justify-self: end;
        margin: 4px 8px 0 0;
        pointer-events: none;
        color: #6a6a6a;
      }
      .mag {
        margin-left: 17px;
        pointer-events: none;
      }
      .kinds {
        display: grid;
        grid-template-columns: repeat(5, 48px);
        justify-items: center;
        margin-left: 20px;
        color: #868686;
      }
      .toggle {
        margin-left: 20px;
      }
      .lab {
        width: 112px;
        margin-left: 16px;
      }
      .lab.fill {
        width: 63px;
        margin-left: 22px;
      }
      .combo {
        display: flex;
        height: 37px;
        border: 2px solid #3e3e3e;
        border-radius: 6px;
        background: #282828;
        font-size: 22px;
        font-weight: 400;
      }
      .combo input {
        width: 77px;
        padding: 0 4px;
        border-right: 2px solid #3e3e3e;
      }
      .combo button {
        width: 26px;
      }
      .combo .chev {
        margin: 4px 0 0;
      }
      .locks {
        display: flex;
        align-items: center;
        gap: 18px;
        color: #868686;
      }
      .locks .tight {
        margin: 0 -1px 0 -3px;
      }
      .lab.short {
        width: 73px;
        margin-left: 7px;
      }
      .body {
        flex: 1;
        min-height: 0;
        display: grid;
        grid-template-columns: minmax(0, 1fr) 32px;
        background: #2a2a2a;
      }
      .gutter {
        background: #272727;
      }
      .layer {
        display: flex;
        height: 70px;
        color: #e8e8e8;
      }
      .eye {
        width: 61px;
        background: #323232;
        border-right: 2px solid #282828;
      }
      .info {
        flex: 1;
        display: flex;
        align-items: center;
        background: #4a4a4a;
        padding: 0 32px 0 7px;
      }
      .thumb {
        width: 64px;
        height: 52px;
        border: 2px solid #6e6e6e;
        background: #fff;
        margin-right: 20px;
      }
      .info svg {
        margin-left: auto;
      }
      .foot {
        display: flex;
        justify-content: flex-end;
        align-items: center;
        gap: 31px;
        height: 50px;
        flex: none;
        padding: 0 56px 1px 0;
        border-top: 2px solid #222;
        color: #d6d6d6;
      }
      .dim {
        color: #858585;
      }
      .fx {
        font: italic 400 27px/30px "Open Sans", sans-serif;
      }
      .drop {
        align-items: flex-end;
        margin-right: -10px;
      }
      .drop path {
        fill: currentColor;
      }
    `,
  ];
  render() {
    const corner = html`<svg width="8" height="5" viewBox="0 0 8 5"><path d="M0 0H8L4 5Z" /></svg>`;
    return html`
      <ps-tabstrip .tabs=${["图层", "通道", "路径"]} .active=${0}></ps-tabstrip>
      <div class="row filter">
        <div class="pick kind">
          <select aria-label="滤镜类型"><option>类型</option></select>
          <svg class="mag" width="22" height="22" viewBox="0 0 22 22">
            <circle cx="9" cy="9" r="7.500" fill="none" stroke="#969696" stroke-width="2" />
            <path d="M14 14L19.500 20" stroke="#969696" stroke-width="3.500" stroke-linecap="round" />
          </svg>
          ${chevron()}
        </div>
        <div class="kinds">
          <button aria-label="像素图层滤镜">
            <svg width="24" height="22"><path d="M1 2H23V20H1Z" fill="none" stroke="currentColor" stroke-width="2" /><path d="M4 16L9 8L12 13L15 9L20 16Z" fill="currentColor" /></svg>
          </button>
          <button aria-label="调整图层滤镜">${halfDisc}</button>
          <button aria-label="文字图层滤镜">
            <svg width="20" height="22"><path d="M2 7V2.500H18V7M10 2V20M6 20H14" fill="none" stroke="currentColor" stroke-width="3" /></svg>
          </button>
          <button aria-label="形状图层滤镜">
            <svg width="24" height="24" fill="none" stroke="currentColor" stroke-width="2">
              <path d="M4 4H20V20H4Z" /><path d="M2 2H6V6H2ZM18 2H22V6H18ZM2 18H6V22H2ZM18 18H22V22H18Z" fill="#323232" />
            </svg>
          </button>
          <button aria-label="智能对象滤镜">
            <svg width="22" height="24"><path d="M5 11V2H14L20 8V20H13" fill="none" stroke="currentColor" stroke-width="2" /><path d="M13 1V9H21ZM1 12H12V23H1Z" fill="currentColor" /></svg>
          </button>
        </div>
        <button class="toggle" aria-label="打开或关闭图层滤镜">
          <svg width="20" height="38"><rect x="2" y="2" width="16" height="34" rx="8" fill="#2c2c2c" stroke="#444" stroke-width="2" /><circle cx="10" cy="9" r="8.500" fill="#868686" /></svg>
        </button>
      </div>
      <div class="row">
        <div class="pick">
          <select aria-label="混合模式"><option>正常</option></select>
          ${chevron()}
        </div>
        <label class="lab" for="opacity">不透明度:</label>
        <div class="combo"><input id="opacity" value="100%" /><button aria-label="调整不透明度">${chevron()}</button></div>
      </div>
      <div class="row lock">
        <span class="lab short">锁定:</span>
        <div class="locks">
          <button aria-label="锁定透明像素">
            <svg width="24" height="24"><path d="M2 2H22V22H2Z" fill="none" stroke="currentColor" stroke-width="2" /><path d="M8 2H15V8H8ZM2 8H8V15H2ZM15 8H22V15H15ZM8 15H15V22H8Z" fill="currentColor" /></svg>
          </button>
          <button aria-label="锁定图像像素"><svg width="28" height="28" viewBox="-17 -17 34 34">${brushShape}</svg></button>
          <button class="tight" aria-label="锁定位置"><svg width="26" height="26" viewBox="-16 -16 32 32">${moveShape}</svg></button>
          <button aria-label="防止自动嵌套">
            <svg width="28" height="24"><path d="M5 5V19H23V10L18 5Z" fill="none" stroke="currentColor" stroke-width="2" /><path d="M16 4V12H24ZM0 4H3V6H0ZM4 0H6V3H4ZM22 0H24V3H22ZM25 4H28V6H25ZM0 18H3V20H0ZM4 21H6V24H4ZM22 21H24V24H22ZM25 18H28V20H25Z" fill="currentColor" /></svg>
          </button>
          <button aria-label="锁定全部">
            <svg width="22" height="24" viewBox="-2 0 22 24"><path d="M5 10V7Q5 2 10 2Q15 2 15 7V10" fill="none" stroke="currentColor" stroke-width="2.500" /><path d="M0 10Q0 9 1 9H19Q20 9 20 10V22Q20 23 19 23H1Q0 23 0 22Z" fill="currentColor" /><circle cx="10" cy="15.500" r="2.500" fill="#323232" /></svg>
          </button>
        </div>
        <label class="lab fill" for="fill">填充:</label>
        <div class="combo"><input id="fill" value="100%" /><button aria-label="调整填充">${chevron()}</button></div>
      </div>
      <div class="body">
        <div class="layer">
          <button class="eye" aria-label="指示图层可见性">
            <svg width="24" height="16" viewBox="0 0 24 16"><path d="M0 8Q5 1 12 1Q19 1 24 8Q19 15 12 15Q5 15 0 8Z" fill="currentColor" /><circle cx="12" cy="8" r="5.500" fill="#323232" /><circle cx="13" cy="6" r="1.500" fill="currentColor" /></svg>
          </button>
          <div class="info">
            <span class="thumb"></span>
            <span>背景</span>
            <svg width="22" height="24"><path d="M6 9V7Q6 2 11 2Q16 2 16 7V9M2 9H20V22H2Z" fill="none" stroke="currentColor" stroke-width="2" /><circle cx="11" cy="15.500" r="2.500" fill="currentColor" /></svg>
          </div>
        </div>
        <div class="gutter"></div>
      </div>
      <div class="foot">
        <button class="dim" aria-label="链接图层">
          <svg width="30" height="16" viewBox="0 0 30 16"><path d="M13 3Q11 1 8 1Q1 1.500 1 8Q1 14.500 8 15Q11 15 13 13M17 3Q19 1 22 1Q29 1.500 29 8Q29 14.500 22 15Q19 15 17 13M8 8H22" fill="none" stroke="currentColor" stroke-width="2.500" /></svg>
        </button>
        <button class="dim fx drop" aria-label="添加图层样式">fx${corner}</button>
        <button aria-label="添加图层蒙版">
          <svg width="26" height="20"><path d="M0 1Q0 0 1 0H25Q26 0 26 1V19Q26 20 25 20H1Q0 20 0 19Z" fill="currentColor" /><circle cx="13" cy="10" r="6" fill="#323232" /></svg>
        </button>
        <button class="drop" aria-label="创建新的填充或调整图层">${halfDisc}${corner}</button>
        <button aria-label="创建新组">${folder}</button>
        <button aria-label="创建新图层">${plusBox}</button>
        <button class="dim" aria-label="删除图层">${trash}</button>
      </div>
    `;
  }
}

@customElement("app-root")
class AppRoot extends LitElement {
  static styles = [
    base,
    css`
      :host {
        display: flex;
        flex-direction: column;
        height: 100vh;
        overflow: hidden;
        background: #2a2a2a;
        font-family: "Open Sans", "Noto Sans CJK SC", sans-serif;
      }
      .work {
        flex: 1;
        min-height: 0;
        display: flex;
        border: solid #222;
        border-width: 0 2px;
      }
      .split {
        width: 6px;
        flex: none;
        border: solid #202020;
        border-width: 0 2px;
      }
      .panels {
        flex: 0 0 740px;
        display: flex;
        flex-direction: column;
        min-height: 0;
      }
      .head {
        height: 24px;
        flex: none;
        display: flex;
        justify-content: flex-end;
        align-items: center;
        padding: 0 11px 2px 0;
        background: #262626;
        border-bottom: 2px solid #202020;
      }
      ps-layers {
        margin-top: 2px;
      }
      .edge {
        flex: none;
        height: 3px;
        background: #464646;
        border-top: 2px solid #1c1c1c;
      }
    `,
  ];
  render() {
    return html`
      <ps-menubar></ps-menubar>
      <ps-options></ps-options>
      <div class="work">
        <ps-toolbar></ps-toolbar>
        <div class="split"></div>
        <ps-document></ps-document>
        <div class="split"></div>
        <ps-dock></ps-dock>
        <div class="split"></div>
        <div class="panels">
          <div class="head">${doubleChevron(false)}</div>
          <ps-gradients></ps-gradients>
          <ps-layers></ps-layers>
        </div>
      </div>
      <div class="edge"></div>
    `;
  }
}
